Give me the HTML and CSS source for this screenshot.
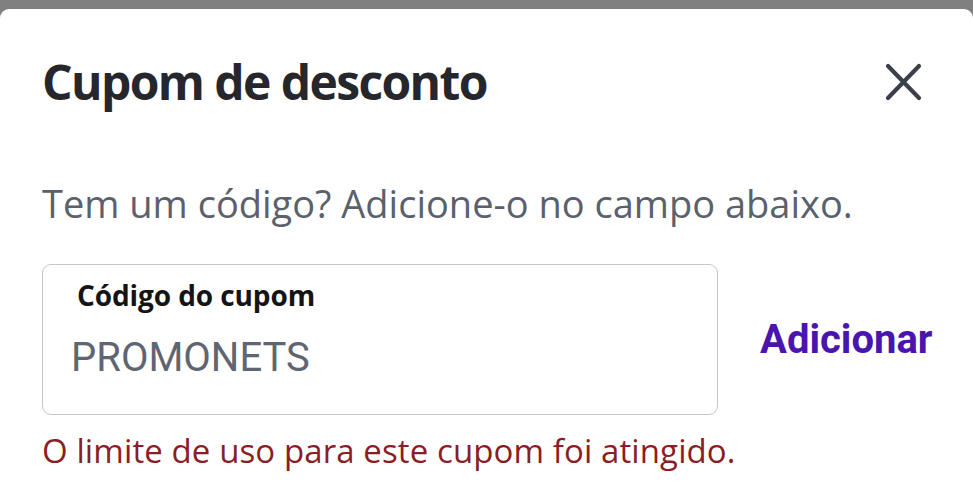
FILE: index.html
```html
<!DOCTYPE html>
<html lang="pt-BR">
<head>
<meta charset="utf-8">
<title>Cupom de desconto</title>
<link rel="stylesheet" href="styles.css">
</head>
<body>
<div class="modal">
  <div class="head">
    <h1 class="title">Cupom de desconto</h1>
    <button class="close" aria-label="Fechar">
      <svg width="40" height="40" viewBox="0 0 40 40"><path d="M5 4 L36 36 M36 4 L5 36" stroke="#3b3f49" stroke-width="4.2" stroke-linecap="round"/></svg>
    </button>
  </div>
  <p class="sub">Tem um código? Adicione-o no campo abaixo.</p>
  <div class="row">
    <div class="field">
      <div class="label">Código do cupom</div>
      <div class="value">PROMONETS</div>
    </div>
    <button class="add">Adicionar</button>
  </div>
  <p class="error">O limite de uso para este cupom foi atingido.</p>
</div>
</body>
</html>
```
FILE: styles.css
```css
html, body { margin: 0; padding: 0; }
body {
  background: #808080;
  font-family: "Open Sans", "Noto Sans", sans-serif;
  height: 500px;
  overflow: hidden;
}
.modal {
  margin-top: 9px;
  background: #fff;
  border-radius: 9px 9px 0 0;
  padding: 45px 30px 60px 42px;
  height: 500px;
  box-sizing: border-box;
}
.head {
  display: flex;
  align-items: center;
  justify-content: space-between;
}
.title {
  margin: 0;
  font-size: 48px;
  line-height: 56px;
  font-weight: 700;
  letter-spacing: -1.6px;
  color: #25272c;
}
.close {
  border: 0;
  background: none;
  padding: 0;
  margin-right: 20px;
  width: 40px;
  height: 40px;
  display: flex;
}
.sub {
  margin: 71px 0 0;
  font-size: 38px;
  line-height: 44px;
  color: #5b616c;
}
.row {
  margin-top: 39px;
  display: flex;
  align-items: center;
  gap: 42px;
}
.field {
  width: 676px;
  box-sizing: border-box;
  border: 1.5px solid #c6c6c8;
  border-radius: 9px;
  padding: 13px 30px 20px 28px;
  height: 151px;
}
.label {
  font-size: 28px;
  line-height: 34px;
  font-weight: 700;
  color: #141414;
  padding-left: 6px;
  letter-spacing: -0.1px;
}
.value {
  margin-top: 22px;
  font-family: Roboto, sans-serif;
  font-size: 40px;
  line-height: 48px;
  color: #5f6571;
}
.add {
  border: 0;
  background: none;
  padding: 0;
  font-family: Roboto, sans-serif;
  font-weight: 700;
  font-size: 40px;
  color: #4a14ae;
}
.error {
  margin: 16px 0 0;
  font-size: 33px;
  line-height: 40px;
  letter-spacing: 0.1px;
  color: #8a1d25;
}
```
